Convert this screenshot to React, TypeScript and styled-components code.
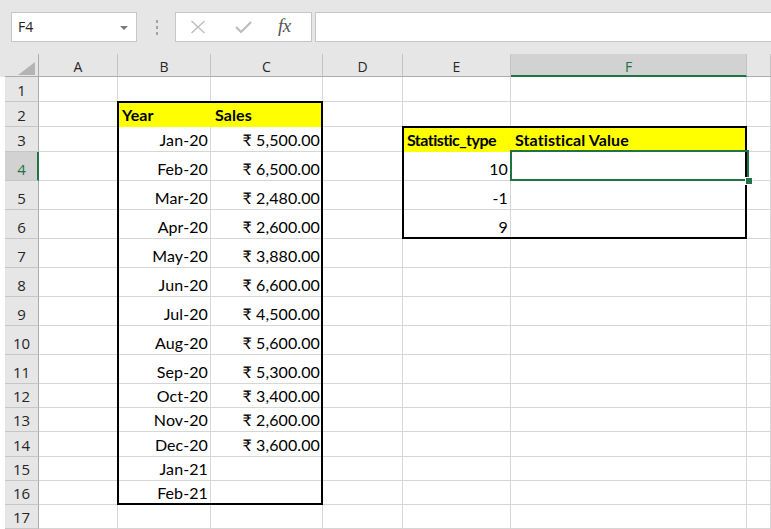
import React from "react";
import styled, { createGlobalStyle, css } from "styled-components";

const GlobalStyle = createGlobalStyle`
  html, body { margin: 0; padding: 0; background: #fff; overflow: hidden; }
  * { box-sizing: border-box; }
`;

const UI_FONT = `"Open Sans", "Noto Sans", "DejaVu Sans", sans-serif`;
const CELL_FONT = `Lato, "Noto Sans", "DejaVu Sans", sans-serif`;
const GREEN = "#217346";

const Window = styled.div`
  width: 771px;
  height: 529px;
  overflow: hidden;
  display: flex;
  flex-direction: column;
  background: #fff;
`;

const Toolbar = styled.div`
  height: 54px;
  flex: none;
  background: #e6e6e6;
  display: flex;
  align-items: flex-start;
  padding: 12px 0 0 11px;
`;

const NameBox = styled.div`
  width: 126px;
  height: 30px;
  background: #fff;
  border: 1px solid #c6c6c6;
  display: flex;
  align-items: center;
  justify-content: space-between;
  padding: 0 8px 0 6px;
  font: 14px/18px ${UI_FONT};
  color: #222;
`;

const Caret = styled.span`
  width: 0;
  height: 0;
  border-left: 4px solid transparent;
  border-right: 4px solid transparent;
  border-top: 4px solid #7a7a7a;
  margin-top: 2px;
`;

const Grip = styled.div`
  width: 2px;
  margin: 8px 17px 0 19px;
  display: flex;
  flex-direction: column;
  gap: 3px;
`;

const GripDot = styled.span`
  width: 2px;
  height: 3px;
  background: #a3a3a3;
`;

const FxButtons = styled.div`
  width: 137px;
  height: 30px;
  background: #fff;
  border: 1px solid #c6c6c6;
  display: flex;
  align-items: center;
  padding-left: 14px;
`;

const IconSlot = styled.span<{ $gap: number }>`
  display: flex;
  margin-right: ${(p) => p.$gap}px;
`;

const FxLabel = styled.span`
  font: italic 19px/20px "Liberation Serif", "DejaVu Serif", serif;
  color: #555;
  letter-spacing: -0.5px;
  margin-top: -2px;
`;

const FormulaInput = styled.div`
  flex: 1;
  height: 30px;
  margin-left: 3px;
  background: #fff;
  border: 1px solid #c6c6c6;
  border-right: none;
`;

const sheetTemplate = css`
  display: grid;
  grid-template-columns: 34px 79px 93px 112px 80px 108px 236px 1fr;
  grid-template-rows: 23px 25px 25px 25px repeat(8, 29px) 24px 24px 25px 24px 24px 1fr;
`;

const SheetStack = styled.div`
  flex: 1;
  display: grid;
  padding-left: 5px;
  background: linear-gradient(#e6e6e6 0 23px, #fff 23px);
`;

const Sheet = styled.div`
  ${sheetTemplate};
  grid-area: 1 / 1;
`;

const OverlayLayer = styled.div`
  ${sheetTemplate};
  grid-area: 1 / 1;
  pointer-events: none;
  z-index: 1;
`;

const Corner = styled.div`
  background: #e6e6e6;
  border-right: 1px solid #ababab;
  border-bottom: 1px solid #ababab;
  display: flex;
  align-items: flex-end;
  justify-content: flex-end;
  padding: 0 3px 1px 0;
`;

const ColHead = styled.div<{ $active?: boolean }>`
  background: ${(p) => (p.$active ? "#d2d2d2" : "#e6e6e6")};
  border-right: 1px solid #c3c3c3;
  border-bottom: ${(p) => (p.$active ? `2px solid ${GREEN}` : "1px solid #ababab")};
  display: flex;
  align-items: center;
  justify-content: center;
  padding-top: ${(p) => (p.$active ? 4 : 3)}px;
  font: 14px/17px ${UI_FONT};
  color: ${(p) => (p.$active ? GREEN : "#262626")};
`;

const RowHead = styled.div<{ $active?: boolean }>`
  background: ${(p) => (p.$active ? "#d2d2d2" : "#e6e6e6")};
  border-right: ${(p) => (p.$active ? `2px solid ${GREEN}` : "1px solid #ababab")};
  border-bottom: 1px solid #c6c6c6;
  display: flex;
  align-items: flex-end;
  justify-content: center;
  padding-bottom: 2px;
  padding-left: ${(p) => (p.$active ? 1 : 0)}px;
  font: 15px/18px ${UI_FONT};
  color: ${(p) => (p.$active ? GREEN : "#262626")};
`;

const Cell = styled.div<{ $align?: "left" | "right"; $bold?: boolean; $fill?: string; $tight?: boolean }>`
  display: flex;
  align-items: flex-end;
  justify-content: ${(p) => (p.$align === "right" ? "flex-end" : "flex-start")};
  padding: 0 2px 2px 4px;
  background: ${(p) => p.$fill ?? "#fff"};
  border-right: 1px solid ${(p) => p.$fill ?? "#d6d6d6"};
  border-bottom: 1px solid ${(p) => p.$fill ?? "#d6d6d6"};
  font: ${(p) => (p.$bold ? 700 : 400)} 16px/18px ${CELL_FONT};
  letter-spacing: ${(p) => (p.$tight ? "-0.55px" : "0.1px")};
  color: #000;
  white-space: nowrap;
  overflow: hidden;
  min-width: 0;
`;

const Frame = styled.div<{ $col: string; $row: string }>`
  grid-column: ${(p) => p.$col};
  grid-row: ${(p) => p.$row};
  margin: -1px 0 0 -1px;
  border: 2px solid #000;
`;

const Selection = styled.div<{ $col: string; $row: string }>`
  grid-column: ${(p) => p.$col};
  grid-row: ${(p) => p.$row};
  margin: -2px -2px 0 -1px;
  border: 2px solid ${GREEN};
  position: relative;
`;

const FillHandle = styled.span`
  position: absolute;
  right: -5px;
  bottom: -5px;
  width: 6px;
  height: 6px;
  background: ${GREEN};
  box-shadow: 0 0 0 1px #fff;
`;

type CellSpec = { text: string; align?: "left" | "right"; bold?: boolean; fill?: string; tight?: boolean };

const YELLOW = "#ffff00";
const COLS = ["A", "B", "C", "D", "E", "F", ""];

const sales: [string, string][] = [
  ["Jan-20", "₹ 5,500.00"],
  ["Feb-20", "₹ 6,500.00"],
  ["Mar-20", "₹ 2,480.00"],
  ["Apr-20", "₹ 2,600.00"],
  ["May-20", "₹ 3,880.00"],
  ["Jun-20", "₹ 6,600.00"],
  ["Jul-20", "₹ 4,500.00"],
  ["Aug-20", "₹ 5,600.00"],
  ["Sep-20", "₹ 5,300.00"],
  ["Oct-20", "₹ 3,400.00"],
  ["Nov-20", "₹ 2,600.00"],
  ["Dec-20", "₹ 3,600.00"],
  ["Jan-21", ""],
  ["Feb-21", ""],
];

const stats: Record<number, string> = { 4: "10", 5: "-1", 6: "9" };

function buildRow(r: number): CellSpec[] {
  const row: CellSpec[] = COLS.map(() => ({ text: "" }));
  if (r === 2) {
    row[1] = { text: "Year", bold: true, fill: YELLOW };
    row[2] = { text: "Sales", bold: true, fill: YELLOW };
  }
  if (r >= 3 && r <= 16) {
    const [m, v] = sales[r - 3];
    row[1] = { text: m, align: "right" };
    row[2] = { text: v, align: "right" };
  }
  if (r === 3) {
    row[4] = { text: "Statistic_type", bold: true, fill: YELLOW, tight: true };
    row[5] = { text: "Statistical Value", bold: true, fill: YELLOW };
  }
  if (stats[r]) row[4] = { text: stats[r], align: "right" };
  return row;
}

const rows = Array.from({ length: 17 }, (_, i) => i + 1);

const CrossIcon = () => (
  <svg width="16" height="14" viewBox="0 0 16 14">
    <path d="M1.5 1 L14.5 13 M14.5 1 L1.5 13" stroke="#bdbdbd" strokeWidth="1.4" fill="none" />
  </svg>
);

const CheckIcon = () => (
  <svg width="17" height="12" viewBox="0 0 17 12">
    <path d="M1 6 L6 11 L16 1" stroke="#bdbdbd" strokeWidth="2.2" fill="none" />
  </svg>
);

const CornerTriangle = () => (
  <svg width="17" height="13" viewBox="0 0 17 13">
    <polygon points="17,0 17,13 0,13" fill="#b4b4b4" />
  </svg>
);

export default function App() {
  return (
    <>
      <GlobalStyle />
      <Window>
        <Toolbar>
          <NameBox>
            <span>F4</span>
            <Caret />
          </NameBox>
          <Grip>
            <GripDot />
            <GripDot />
            <GripDot />
          </Grip>
          <FxButtons>
            <IconSlot $gap={29}>
              <CrossIcon />
            </IconSlot>
            <IconSlot $gap={26}>
              <CheckIcon />
            </IconSlot>
            <FxLabel>fx</FxLabel>
          </FxButtons>
          <FormulaInput />
        </Toolbar>
        <SheetStack>
          <Sheet>
            <Corner>
              <CornerTriangle />
            </Corner>
            {COLS.map((c, i) => (
              <ColHead key={`h${i}`} $active={c === "F"}>
                {c}
              </ColHead>
            ))}
            {rows.map((r) => (
              <React.Fragment key={r}>
                <RowHead $active={r === 4}>{r}</RowHead>
                {buildRow(r).map((cell, ci) => (
                  <Cell
                    key={ci}
                    $align={cell.align}
                    $bold={cell.bold}
                    $fill={cell.fill}
                    $tight={cell.tight}
                  >
                    {cell.text}
                  </Cell>
                ))}
              </React.Fragment>
            ))}
          </Sheet>
          <OverlayLayer>
            <Frame $col="3 / 5" $row="3 / 18" />
            <Frame $col="6 / 8" $row="4 / 8" />
            <Selection $col="7 / 8" $row="5 / 6">
              <FillHandle />
            </Selection>
          </OverlayLayer>
        </SheetStack>
      </Window>
    </>
  );
}
